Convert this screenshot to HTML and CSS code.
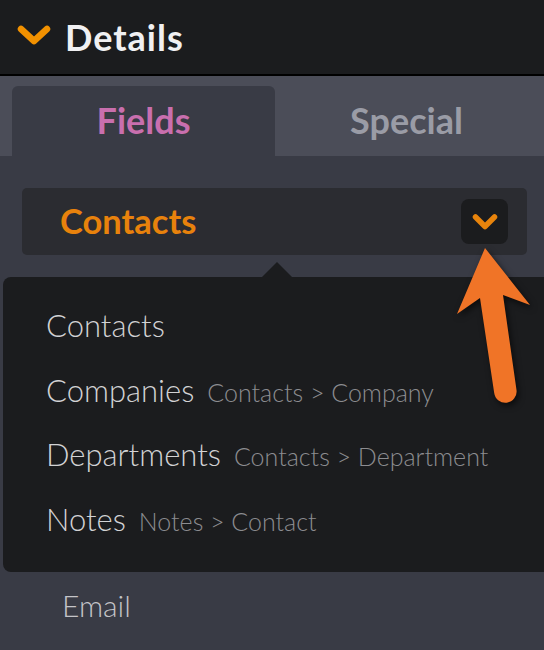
FILE: index.html
```html
<!DOCTYPE html>
<html>
<head>
<meta charset="utf-8">
<link rel="stylesheet" href="styles.css">
</head>
<body>
<div class="panel">
  <header class="header">
    <svg class="header-chevron" width="34" height="22" viewBox="0 0 34 22"><path d="M4 4 L17 16 L30 4" fill="none" stroke="#f29100" stroke-width="6.5" stroke-linecap="round" stroke-linejoin="round"/></svg>
    <span class="header-title">Details</span>
  </header>
  <nav class="tabs">
    <div class="tab tab-active">Fields</div>
    <div class="tab">Special</div>
  </nav>
  <main class="content">
    <div class="select">
      <span class="select-value">Contacts</span>
      <span class="select-button">
        <svg width="26" height="18" viewBox="0 0 26 18"><path d="M3.5 4 L13 13.5 L22.5 4" fill="none" stroke="#e8840c" stroke-width="5.5" stroke-linecap="round" stroke-linejoin="round"/></svg>
      </span>
    </div>
    <div class="field">Email</div>
  </main>
  <div class="dropdown">
    <div class="option"><span class="option-main">Contacts</span></div>
    <div class="option"><span class="option-main">Companies</span><span class="option-sub">Contacts &gt; Company</span></div>
    <div class="option"><span class="option-main">Departments</span><span class="option-sub">Contacts &gt; Department</span></div>
    <div class="option"><span class="option-main">Notes</span><span class="option-sub">Notes &gt; Contact</span></div>
  </div>
  <svg class="callout" width="544" height="650" viewBox="0 0 544 650">
    <path d="M485 248 L530 305 L503 295 L516.5 390 A11.2 11.2 0 0 1 494.2 393 L480 298 L457 314 Z" fill="#f07427"/>
  </svg>
</div>
</body>
</html>
```
FILE: styles.css
```css
* { box-sizing: border-box; }
html, body {
  margin: 0;
  padding: 0;
  background: #393b45;
}
body {
  font-family: Lato, "Open Sans", sans-serif;
  width: 544px;
  height: 650px;
  overflow: hidden;
}
.panel {
  position: relative;
  width: 544px;
  height: 650px;
}
.header {
  height: 76px;
  background: #1b1c1e;
  border-bottom: 2px solid #000;
  display: flex;
  align-items: center;
  padding-left: 17px;
  gap: 14px;
}
.header-chevron { display: block; margin-top: -2px; }
.header-title {
  color: #f0f0f2;
  font-weight: 700;
  font-size: 36px;
  letter-spacing: 1px;
  margin-top: -1px;
}
.tabs {
  display: flex;
  height: 80px;
  background: #4b4d58;
  padding: 10px 6px 0 12px;
}
.tab {
  flex: 1;
  display: flex;
  align-items: center;
  justify-content: center;
  font-size: 36px;
  font-weight: 700;
  color: #9a9ca6;
  padding-bottom: 2px;
}
.tab-active {
  flex: 0 0 263px;
  background: #393b45;
  border-radius: 6px 6px 0 0;
  color: #c96fae;
}
.content {
  padding: 32px 17px 0 22px;
}
.select {
  height: 67px;
  background: #2b2c31;
  border-radius: 5px;
  display: flex;
  align-items: center;
  justify-content: space-between;
  padding: 0 19px 0 38px;
}
.select-value {
  color: #e8820c;
  font-weight: 700;
  font-size: 34.5px;
  margin-top: -2px;
}
.select-button {
  width: 47px;
  height: 45px;
  background: #1b1c1e;
  border-radius: 8px;
  display: flex;
  align-items: center;
  justify-content: center;
}
.select-button svg { display: block; margin-top: 1px; }
.field {
  margin-top: 330px;
  padding-left: 40px;
  font-size: 30px;
  font-weight: 300;
  line-height: 40px;
  color: #c4c4c8;
}
.dropdown {
  position: absolute;
  top: 277px;
  left: 3px;
  width: 560px;
  height: 295px;
  background: #1b1c1e;
  border-radius: 8px;
  padding: 16px 0 0 43px;
}
.dropdown::before {
  content: "";
  position: absolute;
  top: -15px;
  left: 259px;
  border-left: 15px solid transparent;
  border-right: 15px solid transparent;
  border-bottom: 15px solid #1b1c1e;
}
.option {
  display: flex;
  align-items: baseline;
  gap: 13px;
  height: 64.5px;
  line-height: 64.5px;
}
.option-main {
  font-size: 31px;
  font-weight: 300;
  color: #d2d2d4;
}
.option-sub {
  font-size: 25px;
  font-weight: 300;
  color: #8c8c90;
}
.callout {
  position: absolute;
  top: 0;
  left: 0;
  pointer-events: none;
  filter: drop-shadow(2px 3px 3px rgba(0, 0, 0, 0.6));
}
```
